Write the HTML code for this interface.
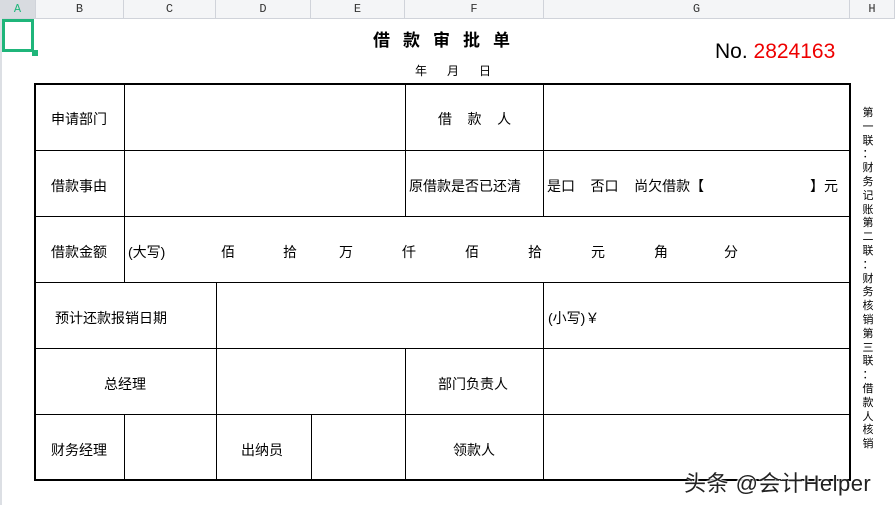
<!DOCTYPE html>
<html><head><meta charset="utf-8"><style>
body{margin:0;width:895px;height:505px;background:#fff;position:relative;overflow:hidden;font-family:"Liberation Sans","Noto Sans CJK SC",sans-serif;color:#000}
.hdr{position:absolute;top:0;left:0;width:895px;height:18px;background:#f4f5f7;border-bottom:1px solid #d0d3da}
.hc{position:absolute;top:0;height:18px;line-height:19px;text-align:center;font-family:"Liberation Mono",monospace;font-size:12px;color:#333;border-right:1px solid #d0d3da;box-sizing:border-box}
.a{position:absolute}
.h{position:absolute;height:2px;background:#000}
.v{position:absolute;width:1px;background:#000}
.t{position:absolute;font-size:14px;white-space:nowrap}
.vt div{height:13.8px;line-height:13.8px;text-align:center;font-size:11px}
</style></head><body>
<div class="hdr">
<div class="hc" style="left:0;width:36px;background:#d8dbe0;color:#1fb57a">A</div>
<div class="hc" style="left:36px;width:88px">B</div>
<div class="hc" style="left:124px;width:92px">C</div>
<div class="hc" style="left:216px;width:95px">D</div>
<div class="hc" style="left:311px;width:94px">E</div>
<div class="hc" style="left:405px;width:139px">F</div>
<div class="hc" style="left:544px;width:306px">G</div>
<div class="hc" style="left:850px;width:45px">H</div>
</div>
<div class="a" style="left:0;top:18px;width:2px;height:487px;background:#dcdfe4"></div>
<div class="a" style="left:2px;top:19px;width:32px;height:33px;border:3px solid #1fb57a;box-sizing:border-box"></div>
<div class="a" style="left:32px;top:50px;width:6px;height:6px;background:#1fb57a"></div>

<div class="t" style="left:373px;top:26px;font-size:17px;font-weight:bold;letter-spacing:13px">借款审批单</div>
<div class="t" style="left:415px;top:62px;font-size:12px">年&nbsp;&nbsp;&nbsp;&nbsp;&nbsp;&nbsp;月&nbsp;&nbsp;&nbsp;&nbsp;&nbsp;&nbsp;日</div>
<div class="t" style="left:715px;top:40px;font-size:21px">No. <span style="color:#e00">2824163</span></div>

<div class="a" style="left:34px;top:83px;width:817px;height:398px;border:2px solid #000;box-sizing:border-box"></div>
<div class="h" style="left:35px;top:150px;width:815px;height:1px"></div>
<div class="h" style="left:35px;top:216px;width:815px;height:1px"></div>
<div class="h" style="left:35px;top:282px;width:815px;height:1px"></div>
<div class="h" style="left:35px;top:348px;width:815px;height:1px"></div>
<div class="h" style="left:35px;top:414px;width:815px;height:1px"></div>
<div class="v" style="left:124px;top:84px;height:198px"></div>
<div class="v" style="left:405px;top:84px;height:132px"></div>
<div class="v" style="left:543px;top:84px;height:132px"></div>
<div class="v" style="left:216px;top:282px;height:198px"></div>
<div class="v" style="left:543px;top:282px;height:198px"></div>
<div class="v" style="left:405px;top:348px;height:132px"></div>
<div class="v" style="left:124px;top:414px;height:66px"></div>
<div class="v" style="left:311px;top:414px;height:66px"></div>

<div class="t" style="left:51px;top:109px">申请部门</div>
<div class="t" style="left:438px;top:109px">借&nbsp;&nbsp;&nbsp;&nbsp;款&nbsp;&nbsp;&nbsp;&nbsp;人</div>
<div class="t" style="left:51px;top:176px">借款事由</div>
<div class="t" style="left:409px;top:176px">原借款是否已还清</div>
<div class="t" style="left:547px;top:176px">是口&nbsp;&nbsp;&nbsp;&nbsp;否口&nbsp;&nbsp;&nbsp;&nbsp;尚欠借款【</div>
<div class="t" style="left:810px;top:176px">】元</div>
<div class="t" style="left:51px;top:242px">借款金额</div>
<div class="t" style="left:128px;top:242px">(大写)</div>
<div class="t" style="left:221px;top:242px">佰</div>
<div class="t" style="left:283px;top:242px">拾</div>
<div class="t" style="left:339px;top:242px">万</div>
<div class="t" style="left:402px;top:242px">仟</div>
<div class="t" style="left:465px;top:242px">佰</div>
<div class="t" style="left:528px;top:242px">拾</div>
<div class="t" style="left:591px;top:242px">元</div>
<div class="t" style="left:654px;top:242px">角</div>
<div class="t" style="left:724px;top:242px">分</div>
<div class="t" style="left:55px;top:308px">预计还款报销日期</div>
<div class="t" style="left:548px;top:308px">(小写)￥</div>
<div class="t" style="left:104px;top:374px">总经理</div>
<div class="t" style="left:438px;top:374px">部门负责人</div>
<div class="t" style="left:51px;top:440px">财务经理</div>
<div class="t" style="left:241px;top:440px">出纳员</div>
<div class="t" style="left:453px;top:440px">领款人</div>

<div class="a vt" style="left:860px;top:107px;width:16px">
<div>第</div><div>一</div><div>联</div><div>：</div><div>财</div><div>务</div><div>记</div><div>账</div><div>第</div><div>二</div><div>联</div><div>：</div><div>财</div><div>务</div><div>核</div><div>销</div><div>第</div><div>三</div><div>联</div><div>：</div><div>借</div><div>款</div><div>人</div><div>核</div><div>销</div>
</div>

<div class="t" style="left:684px;top:466px;font-size:22px;color:#222;letter-spacing:0.5px;text-shadow:1px 1px 1px #fff,-1px -1px 1px #fff">头条 @会计Helper</div>
</body></html>
